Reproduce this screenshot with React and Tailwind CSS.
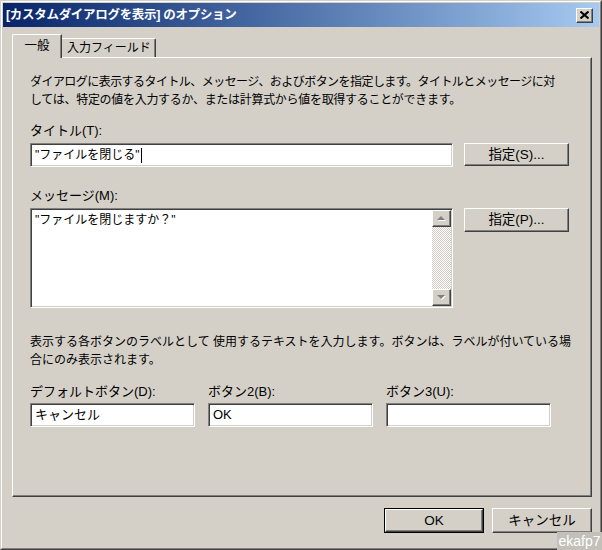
import React from "react";

// Windows classic 3D edges
const raised =
  "border border-t-white border-l-white border-r-[#404040] border-b-[#404040] shadow-[inset_-1px_-1px_0_#808080] bg-[#d4d0c8]";
const sunken =
  "border border-t-[#808080] border-l-[#808080] border-r-white border-b-white shadow-[inset_1px_1px_0_#404040,inset_-1px_-1px_0_#d4d0c8] bg-white";

const Arrow = ({ up }) => (
  <svg width="9" height="6" viewBox="0 0 9 6">
    {up ? (
      <>
        <polygon points="1,5 5,1 9,5" fill="#ffffff" />
        <polygon points="0,4 4,0 8,4" fill="#808080" />
      </>
    ) : (
      <>
        <polygon points="1,1 9,1 5,5" fill="#ffffff" />
        <polygon points="0,0 8,0 4,4" fill="#808080" />
      </>
    )}
  </svg>
);

const Button = ({ children, className = "" }) => (
  <div className={`${raised} flex items-center justify-center text-[13.5px] ${className}`}>{children}</div>
);

const TextBox = ({ value, className = "" }) => (
  <div className={`${sunken} h-[24px] flex items-center pl-[4px] ${className}`}>{value}</div>
);

export default function App() {
  return (
    <div
      className="relative w-[602px] h-[550px] bg-[#d4d0c8] border border-t-[#d4d0c8] border-l-[#d4d0c8] border-r-[#404040] border-b-[#404040] text-[12px] leading-[18px] text-black"
      style={{ fontFamily: '"Liberation Sans", "Noto Sans CJK JP", sans-serif' }}
    >
      <div className="h-full border border-t-white border-l-white border-r-[#808080] border-b-[#808080] p-px flex flex-col">
        {/* title bar */}
        <div className="h-[24px] shrink-0 flex items-center justify-between bg-linear-to-r from-[#0a246a] to-[#a6caf0] pl-[3px] pr-[6px]">
          <span className="text-white font-bold text-[12.5px] tracking-[-0.3px]">[カスタムダイアログを表示] のオプション</span>
          <div className={`${raised} w-[17px] h-[15px] flex items-center justify-center`}>
            <svg width="9" height="8" viewBox="0 0 9 8">
              <path d="M0.5 0.5 L8.5 7.5 M8.5 0.5 L0.5 7.5" stroke="#000" strokeWidth="2" />
            </svg>
          </div>
        </div>

        {/* tabs */}
        <div className="h-[24px] mt-[7px] ml-[9px] flex items-end shrink-0">
          <div className="relative z-10 w-[50px] h-[24px] bg-[#d4d0c8] border-t border-l border-white border-r border-r-[#404040] shadow-[inset_-1px_0_0_#808080] rounded-tl-[2px] flex justify-center pt-[2px] text-[12.5px]">
            一般
          </div>
          <div className="w-[94px] h-[19px] mb-[1px] border-t border-t-white border-r border-r-[#404040] shadow-[inset_-1px_0_0_#808080] rounded-tr-[2px] pl-[5px] leading-[18px] whitespace-nowrap">
            入力フィールド
          </div>
        </div>

        {/* panel */}
        <div className="relative mt-[-1px] ml-[9px] w-[580px] h-[440px] shrink-0 border border-t-white border-l-white border-r-[#404040] border-b-[#404040] shadow-[inset_-1px_-1px_0_#808080] pl-[17px] pt-[15px]">
          <div className="whitespace-nowrap">
            <div className="tracking-[-0.55px]">ダイアログに表示するタイトル、メッセージ、およびボタンを指定します。タイトルとメッセージに対</div>
            <div className="tracking-[-0.3px]">しては、特定の値を入力するか、または計算式から値を取得することができます。</div>
          </div>

          <div className="mt-[13px] text-[13px]">タイトル(T):</div>
          <div className="mt-[3px] flex items-start">
            <TextBox
              className="w-[423px]"
              value={
                <span className="flex items-center">
                  "ファイルを閉じる"
                  <span className="inline-block w-px h-[15px] bg-black ml-px" />
                </span>
              }
            />
            <Button className="ml-[11px] w-[105px] h-[23px]">指定(S)...</Button>
          </div>

          <div className="mt-[20px] text-[13px]">メッセージ(M):</div>
          <div className="mt-[3px] flex items-start">
            <div className={`${sunken} w-[423px] h-[100px] flex p-px`}>
              <div className="flex-1 pl-[3px] pt-[1px]">"ファイルを閉じますか？"</div>
              <div className="w-[19px] h-full flex flex-col">
                <div className={`${raised} h-[17px] flex items-center justify-center`}>
                  <Arrow up />
                </div>
                <div className="flex-1 bg-[repeating-conic-gradient(#d4d0c8_0_25%,#ffffff_0_50%)] bg-[length:2px_2px]" />
                <div className={`${raised} h-[17px] flex items-center justify-center`}>
                  <Arrow />
                </div>
              </div>
            </div>
            <Button className="ml-[11px] w-[105px] h-[24px]">指定(P)...</Button>
          </div>

          <div className="mt-[25px] whitespace-nowrap">
            <div>表示する各ボタンのラベルとして 使用するテキストを入力します。ボタンは、ラベルが付いている場</div>
            <div>合にのみ表示されます。</div>
          </div>

          <div className="mt-[14px] grid grid-cols-[165px_165px_165px] gap-x-[13px] text-[13px]">
            <div>デフォルトボタン(D):</div>
            <div>ボタン2(B):</div>
            <div>ボタン3(U):</div>
            <TextBox className="mt-[2px]" value="キャンセル" />
            <TextBox className="mt-[2px]" value="OK" />
            <TextBox className="mt-[2px]" value="" />
          </div>
        </div>

        {/* dialog buttons */}
        <div className="mt-[11px] ml-[9px] w-[580px] flex justify-end gap-[8px]">
          <div className="border border-black">
            <Button className="w-[98px] h-[23px]">OK</Button>
          </div>
          <Button className="w-[100px] h-[25px]">キャンセル</Button>
        </div>
      </div>

      <div className="absolute right-[-1px] bottom-[-1px] w-[45px] h-[18px] bg-[#c3c0ba] text-white text-[14px] leading-[18px] text-center whitespace-nowrap">
        ekafp7
      </div>
    </div>
  );
}
